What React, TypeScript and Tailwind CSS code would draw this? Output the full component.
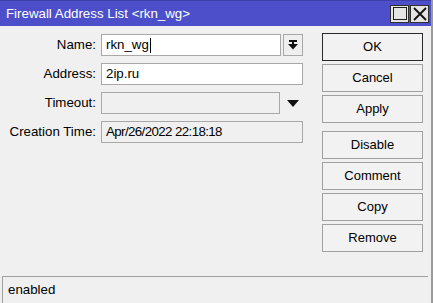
import React from 'react';

const rows = [
  { label: 'Name:', value: 'rkn_wg', kind: 'name' },
  { label: 'Address:', value: '2ip.ru', kind: 'text' },
  { label: 'Timeout:', value: '', kind: 'timeout' },
  { label: 'Creation Time:', value: 'Apr/26/2022 22:18:18', kind: 'readonly' },
];

function Btn({ label, primary }: { label: string; primary?: boolean }) {
  return (
    <button
      className={`h-[28px] w-full text-[13px] text-black bg-[#f2f2f2] border ${
        primary ? 'border-[#2a2a2a]' : 'border-[#a0a0a0]'
      }`}
    >
      {label}
    </button>
  );
}

export default function App() {
  return (
    <div
      className="w-[433px] h-[303px] flex flex-col bg-[#f0f0f0] border-r-2 border-[#9a9a9a] overflow-hidden"
      style={{ fontFamily: '"Liberation Sans", Arial, sans-serif' }}
    >
      {/* title bar */}
      <div className="h-[26px] shrink-0 flex items-center justify-between bg-[#4c4fc9] border-t border-[#3d3fa6] pl-[6px] pr-[2px]">
        <span className="text-white text-[13.3px]">Firewall Address List &lt;rkn_wg&gt;</span>
        <div className="flex gap-[1px]">
          <div className="w-[19px] h-[18px] bg-[#e4e4e4] border border-[#303030] flex items-center justify-center">
            <div className="w-[14px] h-[13px] border border-[#202020]" />
          </div>
          <div className="w-[19px] h-[18px] bg-[#e4e4e4] border border-[#303030] flex items-center justify-center">
            <svg width="14" height="14" viewBox="0 0 14 14">
              <path d="M1 1 L13 13 M13 1 L1 13" stroke="#111" strokeWidth="1.8" />
            </svg>
          </div>
        </div>
      </div>

      {/* body */}
      <div className="flex-1 flex pt-[7px]">
        <div className="flex flex-col gap-[7px] pt-[1px] pl-[4px]">
          {rows.map((r) => (
            <div key={r.label} className="flex items-center h-[22px]">
              <div className="w-[93px] text-right text-[13.3px] text-black pr-[1px]">{r.label}</div>
              <div className="ml-[4px] flex items-center">
                {r.kind === 'name' && (
                  <>
                    <div className="w-[180px] h-[22px] bg-white border border-[#a8a8a8] flex items-center pl-[4px] text-[13.3px] text-black">
                      {r.value}
                      <span className="w-[1px] h-[15px] bg-black ml-[1px]" />
                    </div>
                    <div className="ml-[2px] w-[20px] h-[22px] bg-[#efefef] border border-[#a8a8a8] flex items-center justify-center">
                      <svg width="10" height="10" viewBox="0 0 10 10">
                        <rect x="1" y="0" width="8" height="2" fill="#111" />
                        <path d="M0 4 H10 L5 9.5 Z" fill="#111" />
                        <rect x="4" y="2" width="2" height="3" fill="#111" />
                      </svg>
                    </div>
                  </>
                )}
                {r.kind === 'text' && (
                  <div className="w-[202px] h-[22px] bg-white border border-[#a8a8a8] flex items-center pl-[4px] text-[13.3px] text-black">
                    {r.value}
                  </div>
                )}
                {r.kind === 'timeout' && (
                  <>
                    <div className="w-[179px] h-[22px] bg-[#f0f0f0] border border-[#a8a8a8]" />
                    <div className="ml-[7px] w-[12px] flex items-center justify-center">
                      <svg width="12" height="7" viewBox="0 0 12 7">
                        <path d="M0 0 H12 L6 7 Z" fill="#111" />
                      </svg>
                    </div>
                  </>
                )}
                {r.kind === 'readonly' && (
                  <div className="w-[202px] h-[22px] bg-[#f0f0f0] border border-[#a8a8a8] flex items-center pl-[4px] text-[13.3px] text-black tracking-[-0.6px]">
                    {r.value}
                  </div>
                )}
              </div>
            </div>
          ))}
        </div>

        <div className="ml-auto mr-[8px] w-[101px] flex flex-col">
          <div className="flex flex-col gap-[3px]">
            <Btn label="OK" primary />
            <Btn label="Cancel" />
            <Btn label="Apply" />
          </div>
          <div className="flex flex-col gap-[3px] mt-[8px]">
            <Btn label="Disable" />
            <Btn label="Comment" />
            <Btn label="Copy" />
            <Btn label="Remove" />
          </div>
        </div>
      </div>

      {/* status bar */}
      <div className="h-[27px] shrink-0 ml-[2px] mr-[3px] border-t border-l border-[#a0a0a0] flex items-center pl-[5px] text-[13.3px] text-black">
        enabled
      </div>
    </div>
  );
}
